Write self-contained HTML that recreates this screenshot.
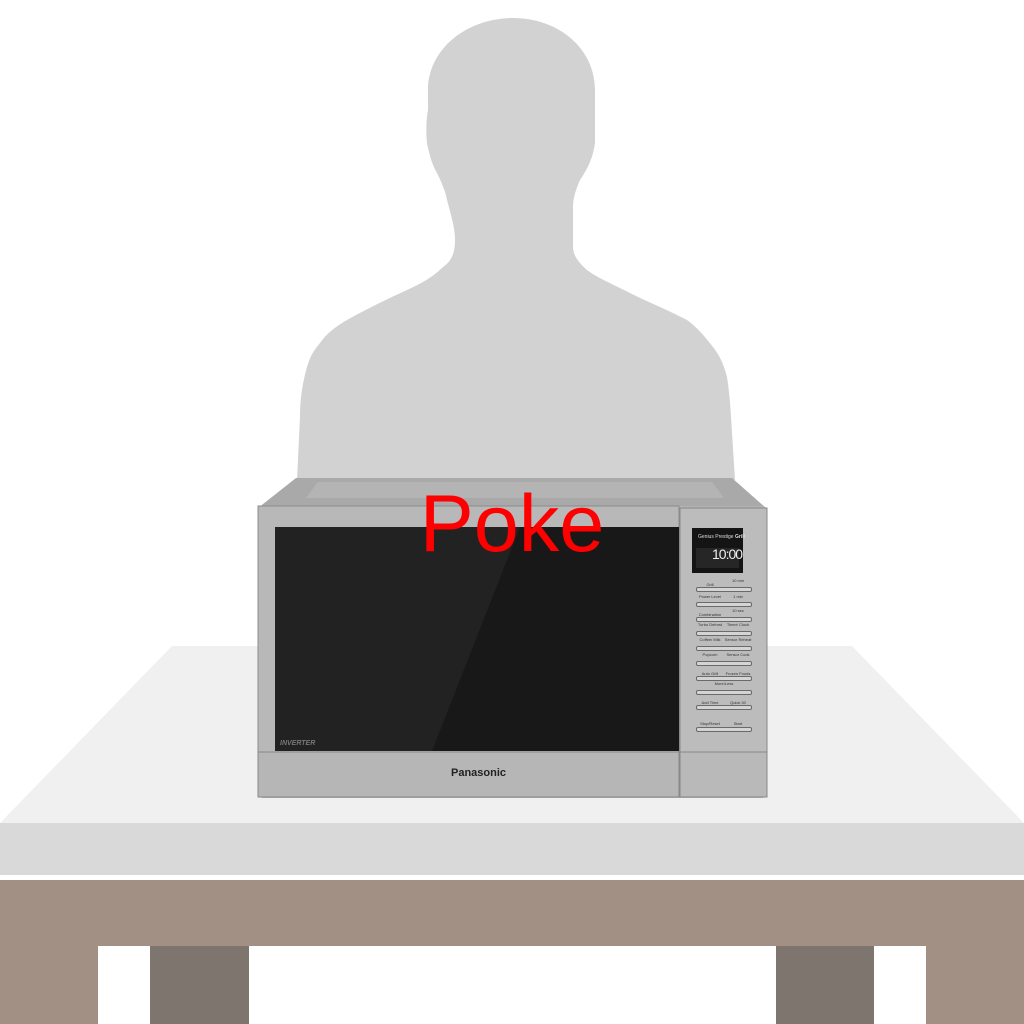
<!DOCTYPE html>
<html><head><style>
body{margin:0;width:1024px;height:1024px;background:#fff;position:relative;overflow:hidden;font-family:"Liberation Sans",sans-serif}
.a{position:absolute}
.btn{position:absolute;left:16px;width:54px;height:3px;border:1px solid #6a6a6a;border-radius:2px;background:#d4d4d4}
.lab{position:absolute;font-size:4px;color:#333;width:28px;text-align:center;line-height:5px}
</style></head><body>
<svg class="a" style="left:0;top:0" width="1024" height="1024">
<path fill="#d2d2d2" d="M513 18 C468 18 428 48 428 90 L428 110 C425 125 427 143 427 143 C430 158 433 166 437 173 C442 183 446 193 447 200 C451 215 455 228 455 240 C455 252 452 261 443 267 C432 278 420 284 407 290 C385 300 365 310 347 320 C335 327 326 334 320 343 C312 352 309 360 307 367 C302 385 300 400 300 417 L297 480 L735 480 L731 417 C730 400 729 390 727 377 C724 365 720 356 713 347 C705 337 698 328 687 320 C668 310 648 302 630 293 C610 283 596 277 587 270 C578 262 573 255 573 247 L573 207 C573 198 576 189 580 180 C588 168 593 158 595 143 L595 90 C595 48 558 18 513 18 Z"/>
<polygon fill="#f0f0f0" points="172,646 852,646 1024,823 0,823"/>
<rect x="0" y="823" width="1024" height="52" fill="#d9d9d9"/>
<rect x="0" y="880" width="1024" height="66" fill="#a39084"/>
<rect x="0" y="946" width="98" height="78" fill="#a39084"/>
<rect x="926" y="946" width="98" height="78" fill="#a39084"/>
<rect x="150" y="946" width="99" height="78" fill="#7e756f"/>
<rect x="776" y="946" width="98" height="78" fill="#7e756f"/>
<polygon fill="#a9a9a9" points="296,478 732,478 766,508 258,508"/>
<polygon fill="#b4b4b4" points="318,482 712,482 724,498 306,498"/>
<rect x="258" y="506" width="509" height="292" rx="5" fill="#b3b3b3"/>
<rect x="258" y="506" width="421" height="246" fill="#b8b8b8" stroke="#8c8c8c"/>
<rect x="275" y="527" width="404" height="224" fill="#181818"/>
<polygon fill="#222" points="275,527 520,527 432,751 275,751"/>
<rect x="258" y="752" width="421" height="45" fill="#b6b6b6" stroke="#888"/>
<rect x="680" y="508" width="87" height="244" fill="#bcbcbc" stroke="#888"/>
<rect x="680" y="752" width="87" height="45" fill="#b9b9b9" stroke="#888"/>
<rect x="692" y="528" width="51" height="45" fill="#141414"/>
<rect x="696" y="548" width="43" height="20" fill="#262626"/>
</svg>
<div class="a" style="left:698px;top:534px;font-size:5px;color:#ddd">Genius Prestige <b>Grill</b></div>
<div class="a" style="left:712px;top:546px;font-size:14px;color:#eee;letter-spacing:-1px">10:00</div>
<div class="a" style="left:680px;top:578px;width:87px;height:160px">
<div class="btn" style="top:9px"></div><div class="btn" style="top:24px"></div><div class="btn" style="top:39px"></div><div class="btn" style="top:53px"></div><div class="btn" style="top:68px"></div><div class="btn" style="top:83px"></div><div class="btn" style="top:98px"></div><div class="btn" style="top:112px"></div><div class="btn" style="top:127px"></div><div class="btn" style="top:149px"></div>
<div class="lab" style="left:16px;top:4px">Grill</div><div class="lab" style="left:44px;top:0">10 min</div>
<div class="lab" style="left:16px;top:16px">Power Level</div><div class="lab" style="left:44px;top:16px">1 min</div>
<div class="lab" style="left:16px;top:34px">Combination</div><div class="lab" style="left:44px;top:30px">10 sec</div>
<div class="lab" style="left:16px;top:44px">Turbo Defrost</div><div class="lab" style="left:44px;top:44px">Timer/ Clock</div>
<div class="lab" style="left:16px;top:59px">Coffee/ Milk</div><div class="lab" style="left:44px;top:59px">Sensor Reheat</div>
<div class="lab" style="left:16px;top:74px">Popcorn</div><div class="lab" style="left:44px;top:74px">Sensor Cook</div>
<div class="lab" style="left:16px;top:93px">Auto Grill</div><div class="lab" style="left:44px;top:93px">Frozen Foods</div>
<div class="lab" style="left:30px;top:103px">More/Less</div>
<div class="lab" style="left:16px;top:122px">Add Time</div><div class="lab" style="left:44px;top:122px">Quick 30</div>
<div class="lab" style="left:16px;top:143px">Stop/Reset</div><div class="lab" style="left:44px;top:143px">Start</div>
</div>
<div class="a" style="left:280px;top:740px;font-size:7px;font-style:italic;font-weight:bold;color:#777">INVERTER</div>
<div class="a" style="left:451px;top:767px;font-size:11px;font-weight:bold;color:#222">Panasonic</div>
<div class="a" style="left:0;top:478px;width:1024px;text-align:center;font-size:81px;color:#ff0000;line-height:92px">Poke</div>
</body></html>
